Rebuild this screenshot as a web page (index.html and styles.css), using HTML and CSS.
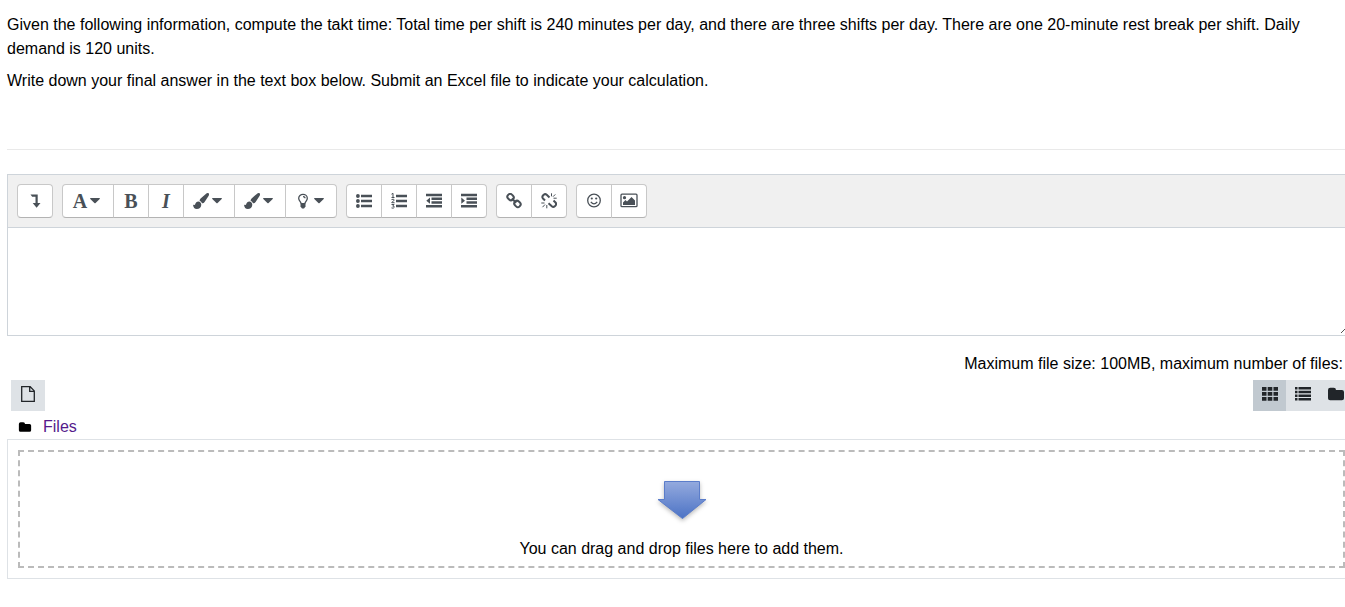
FILE: index.html
```html
<!DOCTYPE html>
<html lang="en">
<head>
<meta charset="utf-8">
<title>Takt time question</title>
<link rel="stylesheet" href="styles.css">
</head>
<body>
<svg class="defs" aria-hidden="true">
  <symbol id="brush" viewBox="0 0 16 16"><path d="M15.500.3c.9.700.5 1.800 0 2.700L11.600 9C10.700 10.300 9.600 10.700 8.800 10 8.400 9 7.800 8.400 6.800 8 6.300 7 6.900 6.200 7.600 5.400L12.800.9C13.700.2 14.700-.3 15.500.3zM5.400 8.600C7 8.700 8.300 10 8.300 11.700 8.300 14.400 6.200 16 3.800 16 1.500 16 .3 14.500 0 11.500c.9.6 1.700.8 2.100.1.500-1.800 1.700-3 3.300-3z"/></symbol>
  <symbol id="caret" viewBox="0 0 10 6"><path d="M.7 0h8.600q1 0 .4.900L5.600 5q-.6.600-1.200 0L.3.900Q-.3 0 .7 0z"/></symbol>
  <symbol id="folder" viewBox="0 0 16 16"><path d="M1 4.500Q1 2.500 3 2.500h3Q8 2.500 8 4.500h5.200q1.800 0 1.800 1.800v5.400q0 1.800-1.800 1.800H2.800Q1 13.500 1 11.700z"/></symbol>
  <symbol id="bars" viewBox="0 0 16 16"><path d="M5 1.700h11v2.600H5zM5 6.700h11v2.600H5zM5 11.700h11v2.600H5z"/></symbol>
</svg>
<main class="page">
  <section class="question">
    <p>Given the following information, compute the takt time: Total time per shift is 240 minutes per day, and there are three shifts per day. There are one 20-minute rest break per shift. Daily demand is 120 units.</p>
    <p>Write down your final answer in the text box below. Submit an Excel file to indicate your calculation.</p>
  </section>

  <section class="editor">
    <div class="toolbar" role="toolbar" aria-label="Text formatting">
      <div class="group">
        <button type="button" aria-label="Show more buttons"><svg class="icon" viewBox="0 0 16 16"><path d="M3.500 1.500h7.200v8.500h2.800L9.600 14.700 5.700 10h2.800V3.800H5.200z"/></svg></button>
      </div>
      <div class="group">
        <button type="button" class="menu" aria-label="Paragraph styles"><span class="letter">A</span><svg class="caret"><use href="#caret"/></svg></button>
        <button type="button" aria-label="Bold"><span class="letter">B</span></button>
        <button type="button" aria-label="Italic"><span class="letter italic">I</span></button>
        <button type="button" class="menu" aria-label="Font colour"><svg class="icon"><use href="#brush"/></svg><svg class="caret"><use href="#caret"/></svg></button>
        <button type="button" class="menu" aria-label="Background colour"><svg class="icon"><use href="#brush"/></svg><svg class="caret"><use href="#caret"/></svg></button>
        <button type="button" class="menu" aria-label="Highlight"><svg class="icon" viewBox="0 0 16 16"><path class="line" d="M6 10.500C6 8.500 3.700 8 3.700 5.200a4.300 3.900 0 0 1 8.600 0C12.300 8 10 8.500 10 10.500M8 3.700q2 0 2 1.600"/><path d="M5.500 10h5v3.500L9 15.500H7L5.500 13.500z"/></svg><svg class="caret"><use href="#caret"/></svg></button>
      </div>
      <div class="group">
        <button type="button" aria-label="Unordered list"><svg class="icon" viewBox="0 0 16 16"><use href="#bars"/><circle cx="1.900" cy="3" r="1.900"/><circle cx="1.900" cy="8" r="1.900"/><circle cx="1.900" cy="13" r="1.900"/></svg></button>
        <button type="button" aria-label="Ordered list"><svg class="icon" viewBox="0 0 16 16"><use href="#bars"/><path class="thin" d="M.5 1.200 2 .3V4.300M.5 4.500h3M.5 6.600q2.700-1.200 2.700.5L.7 9.700h2.800M.5 11.500h2.700l-1.500 1.400q1.900.1 1.500 1.500-.6 1.300-2.700.5"/></svg></button>
        <button type="button" aria-label="Outdent"><svg class="icon" viewBox="0 0 16 16"><path d="M0 .7h16v2.500H0zM5.500 4.500h10.500v2.500H5.500zM5.500 8.300h10.500v2.500H5.500zM0 12h16v2.500H0zM4 4.500v6.300L.3 7.700z"/></svg></button>
        <button type="button" aria-label="Indent"><svg class="icon" viewBox="0 0 16 16"><path d="M0 .7h16v2.500H0zM5.500 4.500h10.500v2.500H5.500zM5.500 8.300h10.500v2.500H5.500zM0 12h16v2.500H0zM.3 4.500v6.300L4 7.700z"/></svg></button>
      </div>
      <div class="group">
        <button type="button" aria-label="Link"><svg class="icon" viewBox="0 0 16 16"><g class="chain"><rect x="1.300" y="1.400" width="6.500" height="5.400" rx="2.500" transform="rotate(45 4.550 4.100)"/><rect x="8.200" y="8.200" width="6.500" height="5.400" rx="2.500" transform="rotate(45 11.450 10.900)"/><path d="m5.800 5.500 4.400 4.200"/></g></svg></button>
        <button type="button" aria-label="Unlink"><svg class="icon" viewBox="0 0 16 16"><path class="chain" d="M4 7.500 2 5.500Q.7 4 2 2.500l.7-.7Q4.200.5 5.700 1.800L8.500 4.500M12.500 7.500 14.500 9.500q1.300 1.500 0 3l-.7.7q-1.500 1.300-3 0L7.500 10.200"/><path class="thin" d="M10.500.3v3M12 3.700 14.300 1.400M12.500 5.200h3.200M.3 10h3.200M4 11.500l-2.500 2.700M5.800 12v3.300"/></svg></button>
      </div>
      <div class="group">
        <button type="button" aria-label="Emoji picker"><svg class="icon" viewBox="0 0 16 16"><circle class="line" cx="8" cy="7.500" r="6.300"/><path class="line" d="M4.800 8.800q3.200 4 6.400 0"/><circle cx="5.800" cy="5.500" r="1.100"/><circle cx="10.200" cy="5.500" r="1.100"/></svg></button>
        <button type="button" aria-label="Insert image"><svg class="icon wide" viewBox="0 0 18 16"><rect class="line" x="1" y="1.200" width="16" height="12.500" rx="1"/><circle cx="4.500" cy="4.700" r="1.600"/><path d="M3 12V9.500L5.500 7 7 8.500 11.500 4 15 7.500V12z"/></svg></button>
      </div>
    </div>
    <textarea class="answer" aria-label="Answer text"></textarea>
    <svg class="grip" viewBox="0 0 16 16" aria-hidden="true"><path d="M2 14 14 2M8 14l6-6"/></svg>
  </section>

  <section class="files">
    <p class="limits">Maximum file size: 100MB, maximum number of files:</p>
    <div class="filebar">
      <button type="button" class="tool add" aria-label="Add file"><svg class="icon" viewBox="0 0 16 16"><path class="line" d="M1.700.700h8.500l4.100 4.200v10.400H1.700zM9.700.7v4.700h4.600"/></svg></button>
      <div class="views">
        <button type="button" class="tool active" aria-label="Display folder with file icons"><svg class="icon" viewBox="0 0 16 16"><path d="M0 1h4.500v3.700H0zM5.700 1h4.600v3.700H5.700zM11.500 1H16v3.700h-4.500zM0 6h4.500v3.700H0zM5.700 6h4.600v3.700H5.700zM11.500 6H16v3.700h-4.500zM0 11h4.500v3.700H0zM5.700 11h4.600v3.700H5.700zM11.500 11H16v3.700h-4.500z"/></svg></button>
        <button type="button" class="tool" aria-label="Display folder with file details"><svg class="icon" viewBox="0 0 16 16"><path d="M0 1h2.500v2.500H0zM3.500 1H16v2.500H3.500zM0 4.700h2.500v2.500H0zM3.500 4.700H16v2.500H3.500zM0 8.400h2.500v2.500H0zM3.500 8.400H16v2.500H3.500zM0 12h2.500v2.500H0zM3.500 12H16v2.500H3.500z"/></svg></button>
        <button type="button" class="tool" aria-label="Display folder as file tree"><svg class="icon" viewBox="1 1 14 14"><use href="#folder" width="16" height="16"/></svg></button>
      </div>
    </div>
    <nav class="path" aria-label="Folder path"><svg class="small"><use href="#folder"/></svg><a href="#files">Files</a></nav>
    <div class="frame" id="files">
      <div class="drop">
        <svg class="arrow" viewBox="0 0 54 48" aria-hidden="true">
          <defs><linearGradient id="blue" x1="0" y1="0" x2="0" y2="1"><stop offset="0" stop-color="#94aade"/><stop offset="1" stop-color="#4c73c5"/></linearGradient></defs>
          <path d="M9.500 3.500h35v18H51L27.500 40.500 3 21.500h6.500z"/>
        </svg>
        <p>You can drag and drop files here to add them.</p>
      </div>
    </div>
  </section>
</main>
</body>
</html>
```
FILE: styles.css
```css
* { box-sizing: border-box; }

body {
  margin: 0;
  overflow-x: hidden;
  background: #fff;
  color: #000;
  font: 16px/24px "Liberation Sans", Arial, sans-serif;
}

p { margin: 0; }
button { margin: 0; padding: 0; font: inherit; cursor: pointer; }
svg { display: block; flex: none; fill: currentColor; }
.defs { display: none; }

/* The form is slightly wider than the window and is clipped on the right. */
.page { margin: 0 -11px 0 7px; padding-top: 13px; }

.question {
  display: flex;
  flex-direction: column;
  gap: 8px;
  padding-bottom: 56px;
  border-bottom: 1px solid #e9e9e9;
}

.editor { position: relative; margin-top: 24px; border: 1px solid #ced4da; }

.toolbar {
  display: flex;
  gap: 9px;
  padding: 9px;
  background: #f0f0f0;
  border-bottom: 1px solid #ced4da;
}

.group { display: flex; }
.group button {
  display: flex;
  align-items: center;
  justify-content: center;
  gap: 3px;
  width: 36px;
  height: 34px;
  margin-left: -1px;
  border: 1px solid #c8c8c8;
  border-bottom-color: #b3b3b3;
  background: #fff;
  color: #495057;
}
.group button:first-child { margin-left: 0; border-radius: 4px 0 0 4px; }
.group button:last-child { border-radius: 0 4px 4px 0; }
.group button:only-child { border-radius: 4px; }
.group .menu { width: 52px; padding-right: 3px; }

.letter { font: bold 20px/24px "Liberation Serif", "Times New Roman", serif; }
.italic { font-style: italic; }

.icon { width: 16px; height: 16px; }
.wide { width: 18px; }
.caret { width: 10px; height: 6px; }
.small { width: 14px; height: 14px; }

.line { fill: none; stroke: currentColor; stroke-width: 1.3; }
.thin { fill: none; stroke: currentColor; stroke-width: 1; }
.chain { fill: none; stroke: currentColor; stroke-width: 2; }

.answer {
  display: block;
  width: 100%;
  height: 107px;
  padding: 6px 12px;
  border: 0;
  background: #fff;
  font: inherit;
  resize: vertical;
}
.grip {
  position: absolute;
  right: 0;
  bottom: 0;
  width: 16px;
  height: 16px;
  fill: none;
  stroke: #555;
  pointer-events: none;
}

.files { margin-top: 16px; }
.limits { padding-right: 13px; text-align: right; }

.filebar {
  display: flex;
  justify-content: space-between;
  margin-top: 4px;
  padding: 0 4px;
}
.views { display: flex; }
.tool {
  display: flex;
  justify-content: center;
  width: 33px;
  height: 31px;
  padding-top: 6px;
  border: 0;
  background: #dee2e6;
  color: #212529;
}
.add { width: 34px; }
.active { background: #c1c9d0; }

.path {
  display: flex;
  align-items: center;
  gap: 11px;
  margin-top: 4px;
  padding-left: 11px;
}
.path a { color: #551a8b; text-decoration: none; }

.frame { padding: 10px; border: 1px solid #dee2e6; }
.drop {
  display: flex;
  flex-direction: column;
  align-items: center;
  gap: 11px;
  padding: 26px 0 5px;
  border: 2px dashed #bbb;
}
.arrow {
  width: 54px;
  height: 48px;
  fill: url(#blue);
  stroke: #5b7dca;
  filter: drop-shadow(0 2px 2px #bbb);
}
```
